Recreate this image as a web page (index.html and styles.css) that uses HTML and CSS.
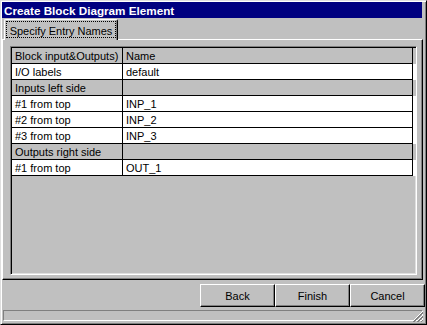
FILE: index.html
```html
<!DOCTYPE html>
<html lang="en">
<head>
    <meta charset="UTF-8">
    <meta name="viewport" content="width=device-width, initial-scale=1.0">
    <title>Create Block Diagram Element</title>
    <link rel="stylesheet" href="styles.css">
</head>
<body>

    <div class="window">
        <div class="titlebar">Create Block Diagram Element</div>

        <div class="tabs">
            <div class="tab"><span class="tab-label">Specify Entry Names</span></div>
        </div>

        <div class="panel">
            <div class="grid-box">
                <div class="row group">
                    <div class="cell">Block input&amp;Outputs)</div>
                    <div class="cell">Name</div>
                </div>
                <div class="row">
                    <div class="cell">I/O labels</div>
                    <div class="cell">default</div>
                </div>
                <div class="row group">
                    <div class="cell">Inputs left side</div>
                    <div class="cell"></div>
                </div>
                <div class="row">
                    <div class="cell">#1 from top</div>
                    <div class="cell">INP_1</div>
                </div>
                <div class="row">
                    <div class="cell">#2 from top</div>
                    <div class="cell">INP_2</div>
                </div>
                <div class="row">
                    <div class="cell">#3 from top</div>
                    <div class="cell">INP_3</div>
                </div>
                <div class="row group">
                    <div class="cell">Outputs right side</div>
                    <div class="cell"></div>
                </div>
                <div class="row">
                    <div class="cell">#1 from top</div>
                    <div class="cell">OUT_1</div>
                </div>
            </div>
        </div>

        <div class="buttons">
            <button type="button">Back</button>
            <button type="button">Finish</button>
            <button type="button">Cancel</button>
        </div>

        <div class="statusbar">
            <!-- size grip -->
            <svg class="grip" width="11" height="11" viewBox="0 0 11 11">
                <path d="M10 1 L1 10 M10 5 L5 10 M10 9 L9 10" stroke="#ffffff" stroke-width="1"/>
                <path d="M11 1 L1 11 M11 2 L2 11 M11 5 L5 11 M11 6 L6 11 M11 9 L9 11" stroke="#808080" stroke-width="1"/>
            </svg>
        </div>
    </div>

</body>
</html>
```

FILE: styles.css
```css
/* Win9x style dialog */
body {
    font-family: "Liberation Sans", Arial, sans-serif;
    font-size: 11px;
    background-color: #c0c0c0;
    margin: 0;
    padding: 0;
}

.window {
    width: 427px;
    height: 325px;
    box-sizing: border-box;
    padding: 1px;
    background-color: #c0c0c0;
    border: 1px solid;
    border-color: #dfdfdf #000000 #000000 #dfdfdf;
    box-shadow: inset 1px 1px 0 #ffffff, inset -1px -1px 0 #808080;
}

.titlebar {
    height: 16px;
    box-sizing: border-box;
    margin-right: 3px;
    padding: 1px 0 0 2px;
    line-height: 15px;
    background-color: #000080;
    color: #ffffff;
    font-weight: bold;
    font-size: 11.7px;
    white-space: nowrap;
}

.tabs {
    display: flex;
    margin-top: 1px;
    height: 20px;
}

.tab {
    position: relative;
    z-index: 1;
    margin-left: 2px;
    width: 114px;
    height: 21px;
    box-sizing: border-box;
    padding: 1px 0 0 1px;
    background-color: #c0c0c0;
    border: 1px solid;
    border-bottom: none;
    border-color: #ffffff #000000 #c0c0c0 #ffffff;
    border-radius: 2px 2px 0 0;
    box-shadow: inset -1px 0 0 #808080;
}

.tab-label {
    display: block;
    width: 110px;
    height: 17px;
    box-sizing: border-box;
    padding-top: 2px;
    border: 1px dotted #000000;
    line-height: 14px;
    text-align: center;
    white-space: nowrap;
}

.panel {
    height: 241px;
    box-sizing: border-box;
    margin-right: 2px;
    padding: 6px 0 0 7px;
    border: 1px solid;
    border-color: #ffffff #000000 #000000 #ffffff;
    box-shadow: inset -1px -1px 0 #808080;
}

.grid-box {
    width: 407px;
    height: 229px;
    box-sizing: border-box;
    padding: 1px 0 0 1px;
    border: 1px solid;
    border-color: #808080 #ffffff #ffffff #808080;
    box-shadow: inset 1px 1px 0 #000000, inset -1px -1px 0 #dfdfdf;
}

.row {
    display: grid;
    grid-template-columns: 111px 290px;
    background-color: #ffffff;
}

.row.group {
    background-color: #c0c0c0;
}

.cell {
    height: 16px;
    box-sizing: border-box;
    padding: 1px 0 0 3px;
    line-height: 14px;
    border-bottom: 1px solid #000000;
    border-right: 1px solid #000000;
    white-space: nowrap;
    overflow: hidden;
}

.buttons {
    display: flex;
    justify-content: flex-end;
    margin-top: 4px;
}

.buttons button {
    width: 75px;
    height: 23px;
    padding: 0;
    font-family: inherit;
    font-size: 11px;
    color: #000000;
    background-color: #c0c0c0;
    border: 1px solid;
    border-color: #ffffff #000000 #000000 #ffffff;
    border-radius: 0;
    box-shadow: inset -1px -1px 0 #808080;
}

.statusbar {
    display: flex;
    justify-content: flex-end;
    align-items: flex-end;
    margin: 3px 0 0 1px;
    width: 420px;
    height: 11px;
    box-sizing: border-box;
    border: 1px solid;
    border-color: #808080 #ffffff #ffffff #808080;
}

.grip {
    display: block;
    margin: 0 -1px -2px 0;
}
```
